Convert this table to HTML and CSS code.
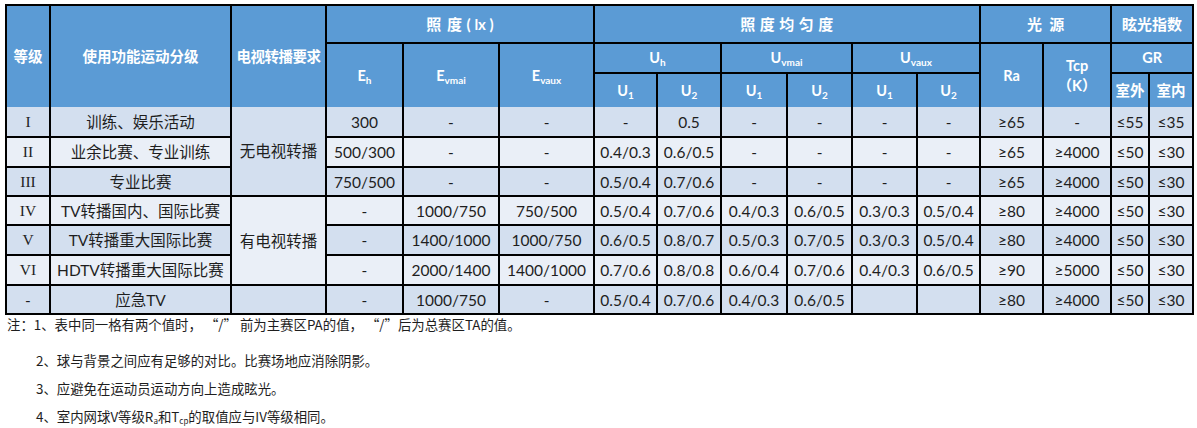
FILE: index.html
```html
<!DOCTYPE html>
<html lang="zh">
<head>
<meta charset="utf-8">
<link rel="stylesheet" href="styles.css">
</head>
<body>
<table class="tbl">
<colgroup>
<col style="width:44px"><col style="width:181px"><col style="width:95px"><col style="width:77px"><col style="width:96px"><col style="width:95px"><col style="width:63px"><col style="width:64px"><col style="width:66px"><col style="width:65px"><col style="width:65px"><col style="width:63px"><col style="width:63px"><col style="width:68px"><col style="width:38px"><col style="width:44px">
</colgroup>
<thead>
<tr class="h1">
<th rowspan="3">等级</th>
<th rowspan="3">使用功能运动分级</th>
<th rowspan="3" class="tight">电视转播要求</th>
<th colspan="3" class="big"><span class="sp">照&nbsp;度</span> (&nbsp;lx&nbsp;)</th>
<th colspan="6" class="big wide">照度均匀度</th>
<th colspan="2" class="big">光&nbsp;&nbsp;源</th>
<th colspan="2" class="big">眩光指数</th>
</tr>
<tr class="h2">
<th rowspan="2">E<sub>h</sub></th>
<th rowspan="2">E<sub>vmai</sub></th>
<th rowspan="2">E<sub>vaux</sub></th>
<th colspan="2">U<sub>h</sub></th>
<th colspan="2">U<sub>vmai</sub></th>
<th colspan="2">U<sub>vaux</sub></th>
<th rowspan="2">Ra</th>
<th rowspan="2">Tcp<br>（K）</th>
<th colspan="2">GR</th>
</tr>
<tr class="h3">
<th>U<sub>1</sub></th><th>U<sub>2</sub></th>
<th>U<sub>1</sub></th><th>U<sub>2</sub></th>
<th>U<sub>1</sub></th><th>U<sub>2</sub></th>
<th class="sm">室外</th><th class="sm">室内</th>
</tr>
</thead>
<tbody>
<tr class="dk r30">
<td class="roman">I</td><td>训练、娱乐活动</td><td rowspan="3" class="dk">无电视转播</td>
<td>300</td><td>-</td><td>-</td><td>-</td><td>0.5</td><td>-</td><td>-</td><td>-</td><td>-</td><td>≥65</td><td>-</td><td>≤55</td><td>≤35</td>
</tr>
<tr class="lt r30">
<td class="roman">II</td><td>业余比赛、专业训练</td>
<td>500/300</td><td>-</td><td>-</td><td>0.4/0.3</td><td>0.6/0.5</td><td>-</td><td>-</td><td>-</td><td>-</td><td>≥65</td><td>≥4000</td><td>≤50</td><td>≤30</td>
</tr>
<tr class="dk r29">
<td class="roman">III</td><td>专业比赛</td>
<td>750/500</td><td>-</td><td>-</td><td>0.5/0.4</td><td>0.7/0.6</td><td>-</td><td>-</td><td>-</td><td>-</td><td>≥65</td><td>≥4000</td><td>≤50</td><td>≤30</td>
</tr>
<tr class="lt r29">
<td class="roman">IV</td><td>TV转播国内、国际比赛</td><td rowspan="3" class="lt">有电视转播</td>
<td>-</td><td>1000/750</td><td>750/500</td><td>0.5/0.4</td><td>0.7/0.6</td><td>0.4/0.3</td><td>0.6/0.5</td><td>0.3/0.3</td><td>0.5/0.4</td><td>≥80</td><td>≥4000</td><td>≤50</td><td>≤30</td>
</tr>
<tr class="dk r30">
<td class="roman">V</td><td>TV转播重大国际比赛</td>
<td>-</td><td>1400/1000</td><td>1000/750</td><td>0.6/0.5</td><td>0.8/0.7</td><td>0.5/0.3</td><td>0.7/0.5</td><td>0.3/0.3</td><td>0.5/0.4</td><td>≥80</td><td>≥4000</td><td>≤50</td><td>≤30</td>
</tr>
<tr class="lt r30">
<td class="roman">VI</td><td>HDTV转播重大国际比赛</td>
<td>-</td><td>2000/1400</td><td>1400/1000</td><td>0.7/0.6</td><td>0.8/0.8</td><td>0.6/0.4</td><td>0.7/0.6</td><td>0.4/0.3</td><td>0.6/0.5</td><td>≥90</td><td>≥5000</td><td>≤50</td><td>≤30</td>
</tr>
<tr class="dk r29">
<td>-</td><td>应急TV</td><td></td>
<td>-</td><td>1000/750</td><td>-</td><td>0.5/0.4</td><td>0.7/0.6</td><td>0.4/0.3</td><td>0.6/0.5</td><td></td><td></td><td>≥80</td><td>≥4000</td><td>≤50</td><td>≤30</td>
</tr>
</tbody>
</table>
<div class="notes">
<p class="n first">注：1、表中同一格有两个值时，&nbsp;“/”&nbsp;前为主赛区PA的值，&nbsp;“/”后为总赛区TA的值。</p>
<p class="n ind">2、球与背景之间应有足够的对比。比赛场地应消除阴影。</p>
<p class="n ind">3、应避免在运动员运动方向上造成眩光。</p>
<p class="n ind">4、室内网球V等级R<sub>a</sub>和T<sub>cp</sub>的取值应与IV等级相同。</p>
</div>
</body>
</html>
```

FILE: styles.css
```css
html, body {
  margin: 0;
  padding: 0;
  background: #ffffff;
}
body {
  padding: 4px 5px 0 5px;
  font-family: Lato, "Noto Sans CJK SC", sans-serif;
  color: #1e1e1e;
}
.tbl {
  border-collapse: collapse;
  table-layout: fixed;
  width: 1187px;
}
.tbl th, .tbl td {
  border: 2px solid #000000;
  padding: 0;
  text-align: center;
  vertical-align: middle;
  white-space: nowrap;
  overflow: hidden;
}
.tbl th {
  background: #5b9bd5;
  color: #ffffff;
  font-weight: bold;
  font-size: 14.5px;
  font-family: Lato, "Noto Sans CJK SC", sans-serif;
  line-height: 20px;
}
.tbl th sub {
  font-size: 10px;
  vertical-align: -3px;
  line-height: 0;
}
.tbl th.tight {
  letter-spacing: -0.5px;
}
.tbl th.big {
  font-size: 15px;
}
.tbl th .sp {
  letter-spacing: 1px;
}
.tbl th.wide {
  letter-spacing: 4.5px;
  padding-left: 4px;
}
.tbl th.sm {
  font-size: 14.5px;
}
.h1 { height: 38px; }
.h2 { height: 30px; }
.h3 { height: 34px; }
.tbl thead tr.h3 th,
.tbl thead th[rowspan="3"],
.tbl thead tr.h2 th[rowspan="2"] {
  border-bottom: none;
}
.tbl tbody tr:first-child td {
  border-top: none;
}
.tbl td {
  font-size: 15.5px;
  line-height: 20px;
}
.r30 { height: 30px; }
.r29 { height: 29px; }
tr.dk td, td.dk { background: #d3dfef; }
tr.lt td, td.lt { background: #eaeff7; }
tr.dk td.lt { background: #eaeff7; }
tr.lt td.dk { background: #d3dfef; }
.roman {
  font-family: "Liberation Serif", serif;
  font-size: 16px;
}
.notes {
  font-family: "Noto Sans CJK SC", sans-serif;
  font-size: 13.4px;
  color: #1e1e1e;
}
.n {
  margin: 0;
  line-height: 28px;
  white-space: nowrap;
}
.n.first {
  line-height: 18px;
  margin-top: 0;
  margin-bottom: 13px;
  padding-left: 2px;
}
.n.ind {
  padding-left: 31px;
}
.n sub {
  font-size: 8px;
  vertical-align: -2px;
  line-height: 0;
}
```
